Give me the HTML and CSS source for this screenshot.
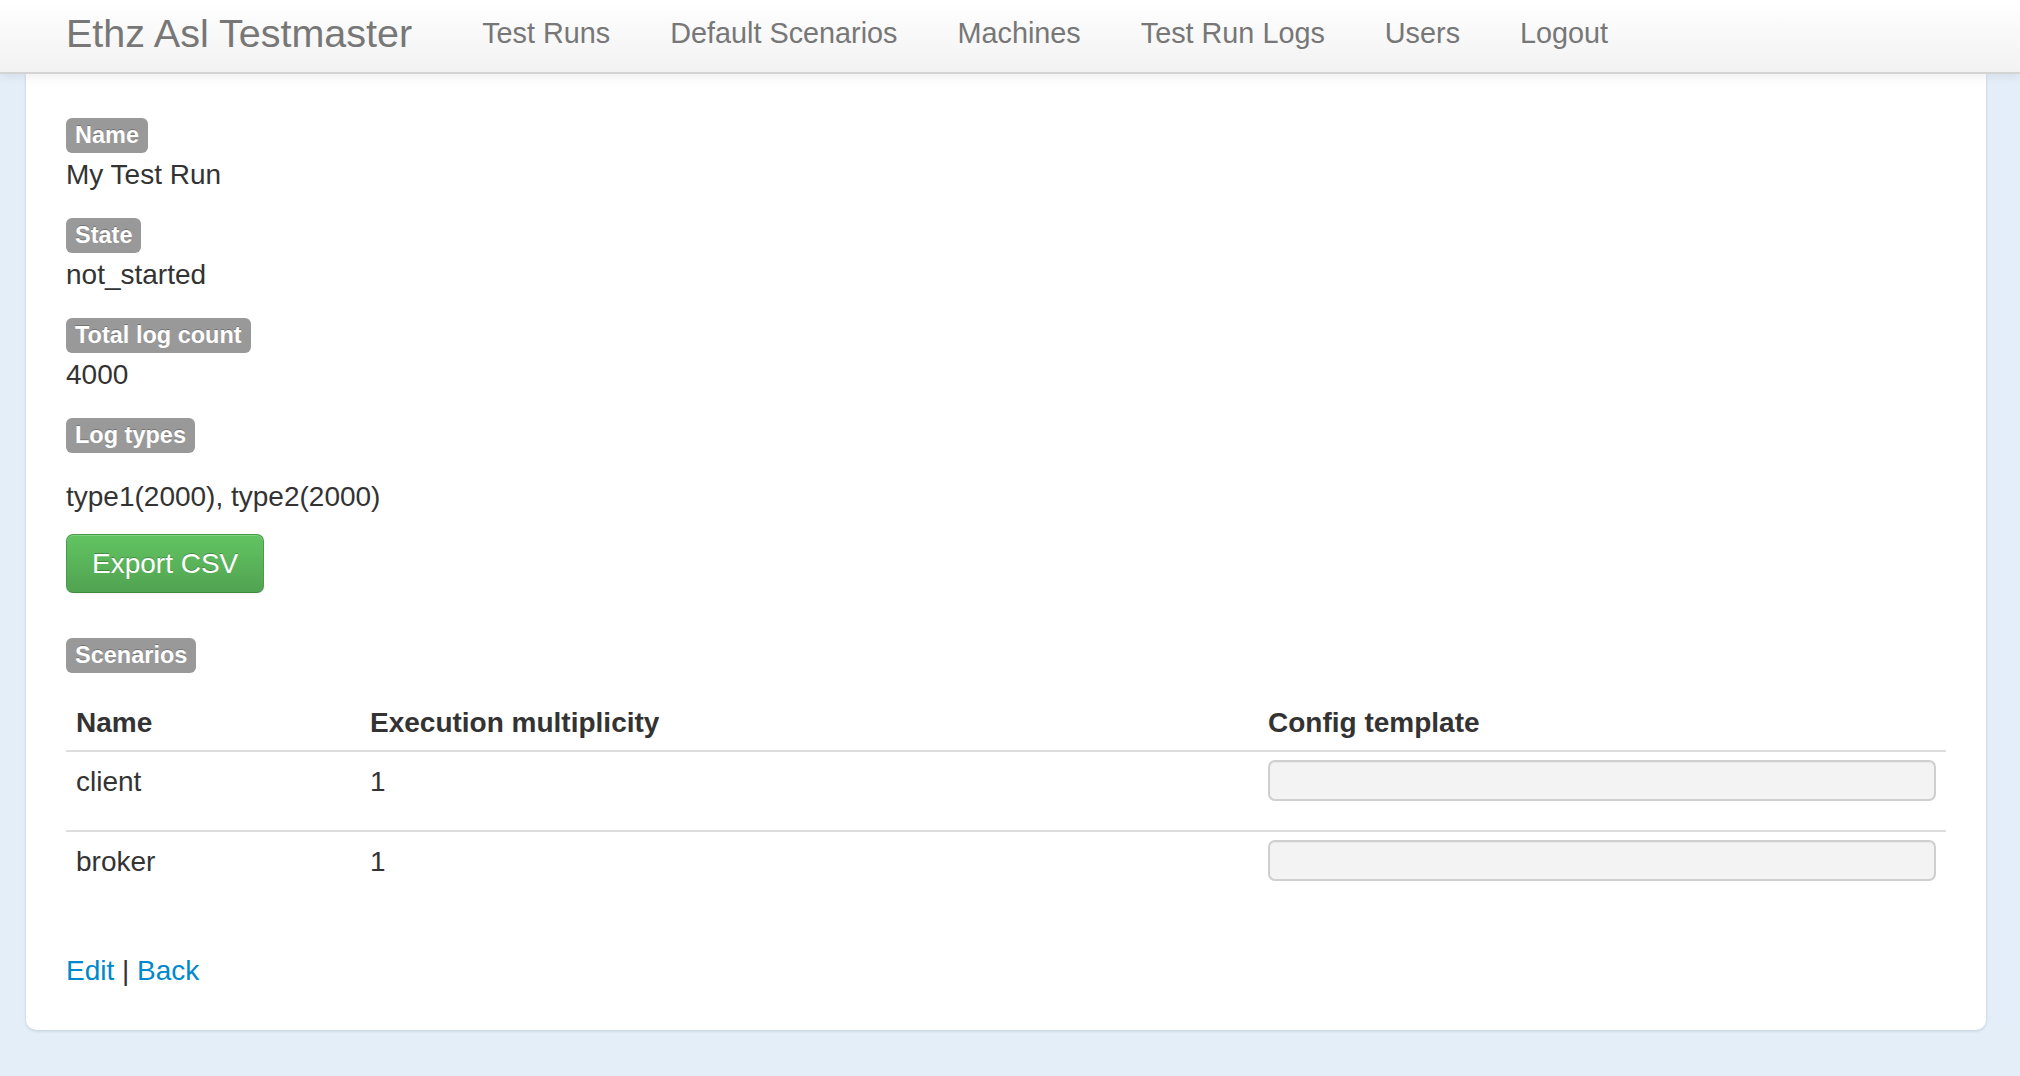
FILE: index.html
```html
<!DOCTYPE html>
<html>
<head>
<meta charset="utf-8">
<title>Ethz Asl Testmaster</title>
<link rel="stylesheet" href="styles.css">
</head>
<body>
<header class="navbar">
  <a class="brand" href="#">Ethz Asl Testmaster</a>
  <nav class="nav">
    <a href="#">Test Runs</a>
    <a href="#">Default Scenarios</a>
    <a href="#">Machines</a>
    <a href="#">Test Run Logs</a>
    <a href="#">Users</a>
    <a href="#">Logout</a>
  </nav>
</header>
<main class="card">
  <div class="field">
    <span class="badge">Name</span>
    <div class="value">My Test Run</div>
  </div>
  <div class="field">
    <span class="badge">State</span>
    <div class="value">not_started</div>
  </div>
  <div class="field">
    <span class="badge">Total log count</span>
    <div class="value">4000</div>
  </div>
  <div class="field field-last">
    <span class="badge">Log types</span>
    <p class="value value-p">type1(2000), type2(2000)</p>
    <a class="btn-success" href="#">Export CSV</a>
  </div>
  <div class="field scenarios">
    <span class="badge">Scenarios</span>
    <table class="table">
      <colgroup>
        <col class="col-name">
        <col class="col-mult">
        <col class="col-config">
      </colgroup>
      <thead>
        <tr><th>Name</th><th>Execution multiplicity</th><th>Config template</th></tr>
      </thead>
      <tbody>
        <tr><td>client</td><td>1</td><td class="cell-input"><input class="template" type="text" readonly></td></tr>
        <tr><td>broker</td><td>1</td><td class="cell-input"><input class="template" type="text" readonly></td></tr>
      </tbody>
    </table>
  </div>
  <div class="actions"><a href="#">Edit</a> | <a href="#">Back</a></div>
</main>
</body>
</html>
```
FILE: styles.css
```css
html, body {
  margin: 0;
  padding: 0;
}
body {
  background: #e4eef8;
  font-family: "Liberation Sans", Arial, Helvetica, sans-serif;
  color: #333;
  font-size: 28px;
  height: 1076px;
  overflow: hidden;
}
a { text-decoration: none; }

.navbar {
  position: relative;
  z-index: 2;
  height: 72px;
  display: flex;
  align-items: flex-start;
  padding-left: 66px;
  background: linear-gradient(#ffffff, #f2f2f2);
  border-bottom: 2px solid #d4d4d4;
  box-shadow: 0 2px 10px rgba(0, 0, 0, 0.08);
}
.brand {
  color: #777;
  font-size: 39.5px;
  line-height: 43px;
  padding-top: 12px;
  margin-right: 40px;
  white-space: nowrap;
}
.nav {
  display: flex;
}
.nav a {
  color: #777;
  font-size: 28.8px;
  line-height: 31px;
  padding: 18px 30px 0;
  white-space: nowrap;
}

.card {
  position: relative;
  z-index: 1;
  margin: 0 34px 0 26px;
  padding: 44px 40px 41px;
  background: #fff;
  border-radius: 0 0 10px 10px;
  box-shadow: 0 1px 3px rgba(40, 70, 110, 0.2);
}

.field {
  display: flex;
  flex-direction: column;
  align-items: flex-start;
  margin-bottom: 25px;
}
.field-last { margin-bottom: 45px; }
.scenarios { margin-bottom: 0; }

.badge {
  display: inline-block;
  background: #999;
  color: #fff;
  font-weight: bold;
  font-size: 23.5px;
  line-height: 27px;
  padding: 4px 9px;
  border-radius: 6px;
  text-shadow: 0 -1px 0 rgba(0, 0, 0, 0.25);
  white-space: nowrap;
}
.value {
  margin: 3px 0 0;
  font-size: 28px;
  line-height: 37px;
}
.value-p {
  margin-top: 25px;
}

.btn-success {
  display: inline-block;
  margin-top: 19px;
  padding: 10px 25px;
  font-size: 28px;
  line-height: 37px;
  color: #fff;
  text-shadow: 0 -1px 0 rgba(0, 0, 0, 0.25);
  background: linear-gradient(#62c462, #51a351);
  border: 1px solid #4a9a4a;
  border-bottom-color: #3f8a3f;
  border-radius: 7px;
  box-shadow: inset 0 1px 0 rgba(255, 255, 255, 0.2), 0 1px 2px rgba(0, 0, 0, 0.05);
}

.table {
  width: 100%;
  margin-top: 16px;
  border-collapse: collapse;
  table-layout: fixed;
}
.col-name { width: 294px; }
.col-mult { width: 898px; }
.table th {
  text-align: left;
  font-weight: bold;
  font-size: 28px;
  line-height: 37px;
  padding: 15px 10px 9px;
  vertical-align: bottom;
}
.table td {
  border-top: 2px solid #dddddd;
  padding: 8px 10px 10px;
  font-size: 28px;
  line-height: 43px;
  vertical-align: top;
}
.table td.cell-input {
  line-height: 0;
}
.template {
  display: block;
  box-sizing: border-box;
  width: 100%;
  height: 41px;
  margin: 0 0 19px;
  padding: 0 10px;
  border: 2px solid #cfcfcf;
  border-radius: 7px;
  background: #f3f3f3;
  box-shadow: inset 0 1px 1px rgba(0, 0, 0, 0.04);
  font-family: inherit;
  outline: none;
}

.actions {
  margin-top: 42px;
  line-height: 37px;
  font-size: 28px;
}
.actions a { color: #0088cc; }
```
